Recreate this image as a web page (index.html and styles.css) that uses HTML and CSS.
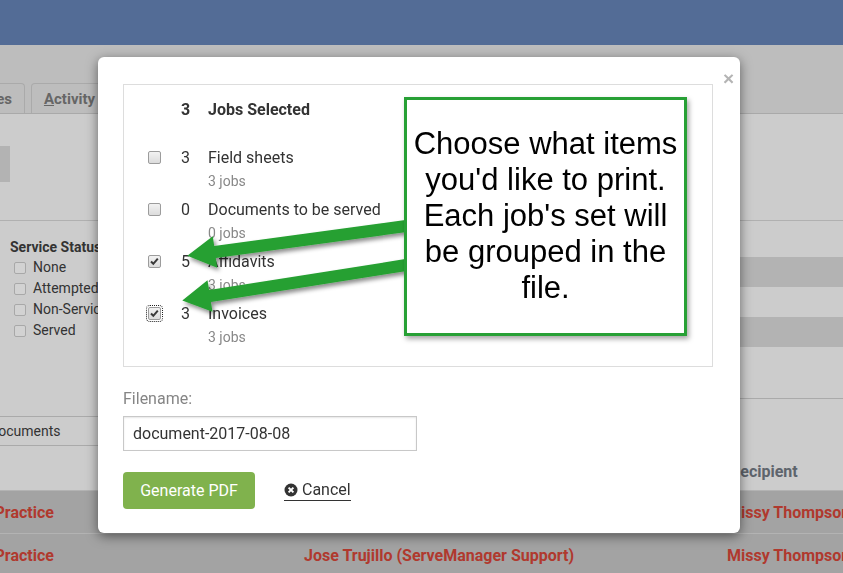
FILE: index.html
```html
<!DOCTYPE html>
<html lang="en">
<head>
<meta charset="utf-8">
<title>Print documents</title>
<link rel="stylesheet" href="styles.css">
</head>
<body>
<div class="page">
  <header class="topbar"></header>
  <nav class="tabbar">
    <div class="tab tab-first">Notes</div>
    <div class="tab"><u>A</u>ctivity</div>
  </nav>
  <div class="toolbar"><div class="tool-btn"></div></div>
  <section class="filters">
    <div class="filters-left">
      <div class="status">
        <div class="status-title">Service Status</div>
        <div class="status-item"><span class="bg-check"></span>None</div>
        <div class="status-item"><span class="bg-check"></span>Attempted</div>
        <div class="status-item"><span class="bg-check"></span>Non-Service</div>
        <div class="status-item"><span class="bg-check"></span>Served</div>
      </div>
      <div class="doc-select"><span>Documents</span></div>
    </div>
    <div class="filters-right">
      <div class="stripe"></div>
      <div class="stripe"></div>
    </div>
  </section>
  <div class="trow thead">
    <span class="c1"></span><span class="c2"></span><span class="c3 th">Recipient</span>
  </div>
  <div class="trow tdata">
    <span class="c1">Riverside Law Practice</span><span class="c2"></span><span class="c3">Missy Thompson</span>
  </div>
  <div class="trow tdata">
    <span class="c1">Riverside Law Practice</span><span class="c2">Jose Trujillo (ServeManager Support)</span><span class="c3">Missy Thompson</span>
  </div>
</div>

<div class="modal">
  <span class="close">×</span>
  <div class="selection">
    <div class="sel-row sel-title">
      <span></span><span class="num">3</span><span class="name">Jobs Selected</span>
    </div>
    <div class="sel-row">
      <span class="cb"></span><span class="num">3</span>
      <div><div class="name">Field sheets</div><div class="sub">3 jobs</div></div>
    </div>
    <div class="sel-row">
      <span class="cb"></span><span class="num">0</span>
      <div><div class="name">Documents to be served</div><div class="sub">0 jobs</div></div>
    </div>
    <div class="sel-row">
      <span class="cb checked"><svg viewBox="0 0 13 13" width="13" height="13"><path d="M3 6.5 L5.3 8.8 L9.8 3.6" fill="none" stroke="#3a3a3a" stroke-width="2"/></svg></span><span class="num">5</span>
      <div><div class="name">Affidavits</div><div class="sub">3 jobs</div></div>
    </div>
    <div class="sel-row">
      <span class="cb checked focus"><svg viewBox="0 0 13 13" width="13" height="13"><path d="M3 6.5 L5.3 8.8 L9.8 3.6" fill="none" stroke="#3a3a3a" stroke-width="2"/></svg></span><span class="num">3</span>
      <div><div class="name">Invoices</div><div class="sub">3 jobs</div></div>
    </div>
  </div>
  <div class="field-label">Filename:</div>
  <input class="field-input" type="text" value="document-2017-08-08">
  <div class="actions">
    <button class="btn-generate" type="button">Generate PDF</button>
    <a class="cancel" href="#"><svg viewBox="0 0 14 14" width="14" height="14"><circle cx="7" cy="7" r="6.5" fill="#333"/><path d="M4.6 4.6 L9.4 9.4 M9.4 4.6 L4.6 9.4" stroke="#fff" stroke-width="2"/></svg>Cancel</a>
  </div>
</div>

<svg class="arrows" viewBox="0 0 843 573" width="843" height="573">
  <defs>
    <filter id="sh" x="-10%" y="-30%" width="130%" height="170%">
      <feDropShadow dx="2" dy="3" stdDeviation="2" flood-color="#000" flood-opacity="0.45"/>
    </filter>
  </defs>
  <polygon filter="url(#sh)" fill="#25a031" points="405.2,220 214.2,246 212.8,236.2 187.3,255.8 217.2,267.8 215.8,258 406.8,232"/>
  <polygon filter="url(#sh)" fill="#25a031" points="405.1,259.1 209.1,290.1 207.5,280.2 182.3,300.4 212.5,311.8 210.9,301.9 406.9,270.9"/>
</svg>

<div class="callout">
  <p>Choose what items<br>you'd like to print.<br>Each job's set will<br>be grouped in the<br>file.</p>
</div>
</body>
</html>
```

FILE: styles.css
```css
* { box-sizing: border-box; }
html, body { margin: 0; padding: 0; }
body {
  width: 843px;
  height: 573px;
  overflow: hidden;
  font-family: Roboto, "Liberation Sans", sans-serif;
  background: #cccccc;
}
.page {
  width: 843px;
  height: 573px;
  overflow: hidden;
  background: #cccccc;
}
.topbar {
  height: 45px;
  background: #536c96;
}
.tabbar {
  height: 69px;
  background: #bdbdbd;
  border-bottom: 1px solid #a9a9a9;
  display: flex;
  align-items: flex-end;
  gap: 6px;
}
.tab {
  height: 30px;
  line-height: 30px;
  padding: 0 12px;
  border: 1px solid #aaaaaa;
  border-bottom: none;
  border-radius: 4px 4px 0 0;
  font-size: 15px;
  font-weight: 700;
  color: #666;
  white-space: nowrap;
}
.tab u { text-decoration-thickness: 1px; }
.tab-first { margin-left: -41px; }
.toolbar {
  height: 107px;
  border-bottom: 1px solid #b0b0b0;
  padding-top: 32px;
}
.tool-btn {
  width: 10px;
  height: 36px;
  background: #b3b3b3;
}
.filters {
  display: flex;
  height: 225px;
}
.filters-left {
  width: 98px;
  flex-shrink: 0;
  display: flex;
  flex-direction: column;
}
.status {
  padding: 16px 0 0 10px;
  color: #333;
  font-size: 14px;
  white-space: nowrap;
}
.status-title {
  font-weight: 700;
  line-height: 20px;
}
.status-item {
  display: flex;
  align-items: center;
  line-height: 21px;
  padding-left: 4px;
}
.bg-check {
  flex-shrink: 0;
  width: 12px;
  height: 12px;
  border: 1px solid #a8a8a8;
  border-radius: 2px;
  background: #d2d2d2;
  margin-right: 7px;
}
.doc-select {
  margin-top: auto;
  height: 30px;
  border-top: 1px solid #aaaaaa;
  border-bottom: 1px solid #aaaaaa;
  display: flex;
  align-items: center;
  font-size: 14px;
  color: #333;
  white-space: nowrap;
}
.doc-select span { margin-left: -11px; }
.filters-right {
  flex: 1;
  height: 178px;
  border-bottom: 1px solid #aaaaaa;
  padding-top: 36px;
  display: flex;
  flex-direction: column;
  gap: 30px;
}
.stripe {
  height: 30px;
  background: #b3b3b3;
}
.trow {
  display: grid;
  grid-template-columns: 54px 673px 1fr;
  align-items: center;
  font-size: 16px;
  font-weight: 700;
  white-space: nowrap;
}
.thead { height: 44px; padding-top: 6px; }
.th { color: #5e646c; margin-left: 3px; }
.tdata {
  height: 43px;
  background: #a3a3a3;
  border-top: 1px solid #b3b3b3;
  color: #b0392e;
}
.c1 {
  display: flex;
  justify-content: flex-end;
}
.c2 { padding-left: 250px; }
.c3 { overflow: hidden; }

/* modal */
.modal {
  position: fixed;
  left: 98px;
  top: 57px;
  width: 642px;
  height: 476px;
  background: #fff;
  border-radius: 6px;
  box-shadow: 0 3px 12px rgba(0, 0, 0, 0.5);
  padding: 27px 27px 0 25px;
  color: #333;
  font-family: Roboto, "Liberation Sans", sans-serif;
}
.close {
  position: absolute;
  top: 12px;
  right: 6px;
  font-family: "Liberation Sans", sans-serif;
  font-size: 19px;
  font-weight: 700;
  color: #b4b4b4;
  line-height: 20px;
}
.selection {
  height: 283px;
  border: 1px solid #dddddd;
  padding: 15px 0 0 24px;
}
.sel-row {
  display: grid;
  grid-template-columns: 33px 27px 1fr;
  align-items: start;
  margin-bottom: 10px;
  font-size: 16px;
}
.sel-title {
  font-weight: 700;
  line-height: 20px;
  margin-bottom: 28px;
}
.num { line-height: 20px; }
.name { line-height: 20px; }
.sub {
  font-size: 14px;
  line-height: 18px;
  margin-top: 4px;
  color: #888;
}
.cb {
  width: 13px;
  height: 13px;
  margin-top: 3px;
  border: 1px solid #9c9c9c;
  border-radius: 2px;
  background: linear-gradient(#f2f2f2, #dcdcdc);
  position: relative;
}
.cb svg {
  position: absolute;
  left: -1px;
  top: -1px;
}
.cb.focus { outline: 1px dotted #222; outline-offset: 1px; }
.field-label {
  margin-top: 22px;
  font-size: 16px;
  line-height: 20px;
  color: #858585;
}
.field-input {
  display: block;
  margin-top: 7px;
  width: 294px;
  height: 35px;
  border: 1px solid #c8c8c8;
  box-shadow: inset 0 1px 2px rgba(0, 0, 0, 0.1);
  padding: 0 9px;
  font-family: Roboto, "Liberation Sans", sans-serif;
  font-size: 16px;
  color: #333;
  outline: none;
}
.actions {
  margin-top: 21px;
  display: flex;
  align-items: center;
  gap: 29px;
}
.btn-generate {
  width: 132px;
  height: 37px;
  border: none;
  border-radius: 4px;
  background: #80b24d;
  color: #fff;
  font-family: Roboto, "Liberation Sans", sans-serif;
  font-size: 16px;
  padding: 0;
}
.cancel {
  display: inline-flex;
  align-items: center;
  gap: 4px;
  color: #333;
  text-decoration: none;
  font-size: 16px;
  line-height: 20px;
  border-bottom: 1px solid #333;
  padding-bottom: 0;
}
.arrows {
  position: fixed;
  left: 0;
  top: 0;
  pointer-events: none;
}
.callout {
  position: fixed;
  left: 404px;
  top: 97px;
  width: 283px;
  height: 239px;
  border: 3px solid #27a035;
  background: #fff;
  box-shadow: 2px 3px 5px rgba(0, 0, 0, 0.35);
  display: flex;
  align-items: center;
  justify-content: center;
  padding-bottom: 2px;
}
.callout p {
  margin: 0;
  font-family: "Liberation Sans", Arial, sans-serif;
  font-size: 31px;
  line-height: 36px;
  text-align: center;
  color: #000;
  white-space: nowrap;
}
```
